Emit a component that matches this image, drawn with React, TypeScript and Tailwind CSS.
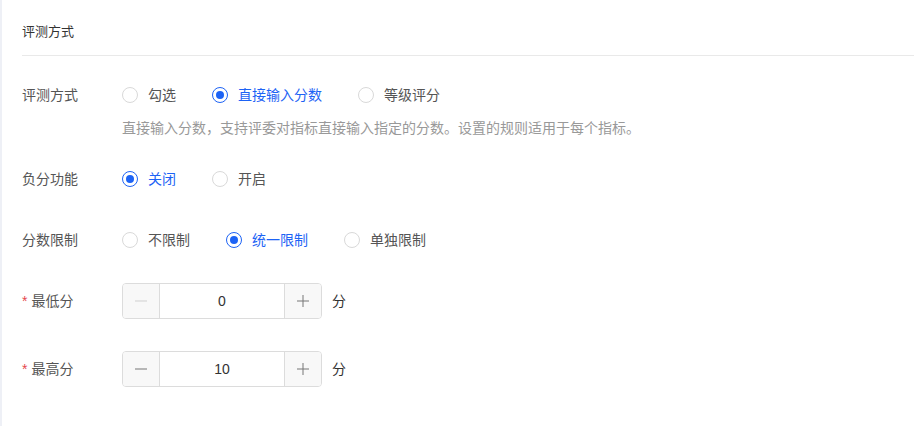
import { useState } from "react";

type Option = { value: string; label: string };

function RadioGroup({
  options,
  value,
  onChange,
}: {
  options: Option[];
  value: string;
  onChange: (v: string) => void;
}) {
  return (
    <div className="flex items-center h-5">
      {options.map((o) => {
        const checked = o.value === value;
        return (
          <label
            key={o.value}
            onClick={() => onChange(o.value)}
            className="flex items-center mr-9 cursor-pointer"
          >
            <span
              className={
                checked
                  ? "w-4 h-4 rounded-full border border-[#1d63f5] flex items-center justify-center"
                  : "w-4 h-4 rounded-full border border-[#d9d9d9] bg-white"
              }
            >
              {checked && <span className="w-2 h-2 rounded-full bg-[#1d63f5]" />}
            </span>
            <span
              className={
                checked
                  ? "ml-[10px] text-[14px] leading-5 text-[#1d63f5]"
                  : "ml-[10px] text-[14px] leading-5 text-[#555]"
              }
            >
              {o.label}
            </span>
          </label>
        );
      })}
    </div>
  );
}

function Stepper({ value, min }: { value: number; min: number }) {
  const [v, setV] = useState(value);
  const atMin = v <= min;
  return (
    <div className="flex items-center">
      <div className="flex h-[36px] w-[200px] border border-[#dcdcdc] rounded-[4px] overflow-hidden">
        <button
          onClick={() => !atMin && setV(v - 1)}
          className="w-[37px] bg-[#f8f8f8] border-r border-[#dcdcdc] flex items-center justify-center"
        >
          <svg width="14" height="14" viewBox="0 0 14 14">
            <path d="M1 7h12" stroke={atMin ? "#cfcfcf" : "#777"} strokeWidth="1" />
          </svg>
        </button>
        <div className="flex-1 flex items-center justify-center text-[14px] text-[#333] bg-white">
          {v}
        </div>
        <button
          onClick={() => setV(v + 1)}
          className="w-[37px] bg-[#f8f8f8] border-l border-[#dcdcdc] flex items-center justify-center"
        >
          <svg width="14" height="14" viewBox="0 0 14 14">
            <path d="M1 7h12M7 1v12" stroke="#777" strokeWidth="1" />
          </svg>
        </button>
      </div>
      <span className="ml-[10px] text-[14px] text-[#333]">分</span>
    </div>
  );
}

export default function App() {
  const [mode, setMode] = useState("direct");
  const [negative, setNegative] = useState("off");
  const [limit, setLimit] = useState("unified");

  return (
    <div
      className="min-h-[426px] bg-white border-l-2 border-[#eef0f6] pl-5"
      style={{ fontFamily: '"Liberation Sans", "Noto Sans CJK SC", sans-serif' }}
    >
      <div className="pt-[22px] pb-[14px] text-[13px] leading-[19px] text-[#333] border-b border-[#e9e9e9]">
        评测方式
      </div>

      <div className="flex items-center mt-[29px]">
        <div className="w-[100px] text-[14px] leading-5 text-[#555]">评测方式</div>
        <RadioGroup
          value={mode}
          onChange={setMode}
          options={[
            { value: "check", label: "勾选" },
            { value: "direct", label: "直接输入分数" },
            { value: "level", label: "等级评分" },
          ]}
        />
      </div>
      <div className="ml-[100px] mt-[13px] text-[14px] leading-5 text-[#999]">
        直接输入分数，支持评委对指标直接输入指定的分数。设置的规则适用于每个指标。
      </div>

      <div className="flex items-center mt-[31px]">
        <div className="w-[100px] text-[14px] leading-5 text-[#555]">负分功能</div>
        <RadioGroup
          value={negative}
          onChange={setNegative}
          options={[
            { value: "off", label: "关闭" },
            { value: "on", label: "开启" },
          ]}
        />
      </div>

      <div className="flex items-center mt-[41px]">
        <div className="w-[100px] text-[14px] leading-5 text-[#555]">分数限制</div>
        <RadioGroup
          value={limit}
          onChange={setLimit}
          options={[
            { value: "none", label: "不限制" },
            { value: "unified", label: "统一限制" },
            { value: "single", label: "单独限制" },
          ]}
        />
      </div>

      <div className="flex items-center mt-[33px]">
        <div className="w-[100px] text-[14px] leading-5 text-[#555]">
          <span className="text-[#e5484d] mr-1">*</span>最低分
        </div>
        <Stepper value={0} min={0} />
      </div>

      <div className="flex items-center mt-[32px]">
        <div className="w-[100px] text-[14px] leading-5 text-[#555]">
          <span className="text-[#e5484d] mr-1">*</span>最高分
        </div>
        <Stepper value={10} min={0} />
      </div>
    </div>
  );
}
